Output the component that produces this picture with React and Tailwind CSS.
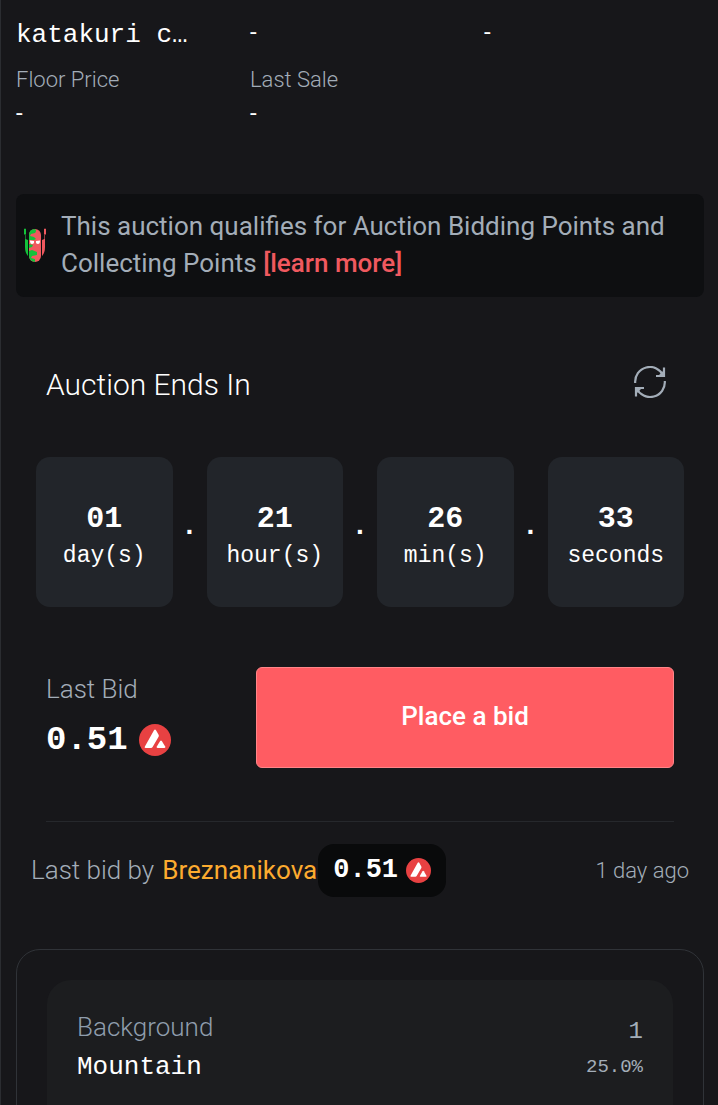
import React from "react";

const details = [
  { label: "Floor Price", value: "-" },
  { label: "Last Sale", value: "-" },
];

const countdown = [
  { value: "01", unit: "day(s)" },
  { value: "21", unit: "hour(s)" },
  { value: "26", unit: "min(s)" },
  { value: "33", unit: "seconds" },
];

const traits = [{ type: "Background", value: "Mountain", count: 1, rarity: "25.0%" }];

function AvaxIcon({ className }) {
  return (
    <svg viewBox="0 0 32 32" className={className} aria-hidden="true">
      <circle cx="16" cy="16" r="16" fill="#e84142" />
      <path
        d="M15 6.2Q16 4.7 17 6.2L19.6 10.8Q20.1 11.8 19.6 12.8L13.6 23.1Q13.1 24 12 24H6.8Q5 24 5.9 22.4Z"
        fill="#fff"
      />
      <path
        d="M21.2 17Q22 15.9 22.8 17L26.2 22.6Q26.9 24 25.4 24H18.6Q17.1 24 17.8 22.6Z"
        fill="#fff"
      />
    </svg>
  );
}

function MascotIcon() {
  return (
    <svg viewBox="0 0 22 34" className="h-[34px] w-[22px] shrink-0" aria-hidden="true">
      <path d="M0 1Q1 0 2 1V6H1.6V11L4 12V28Q1 25 1 19V7L0 6Z" fill="#14c23a" />
      <path d="M22 1Q21 0 20 1V6H20.4V11L18 12V28Q21 25 21 19V7L22 6Z" fill="#f0595f" />
      <rect x="5" y="1" width="12" height="33" rx="6" fill="#f0595f" />
      <path
        d="M5 7Q5 1 11 1Q13 3 11 5L7 6L6 8L10 9L12 11L10 12H5ZM5 16L9 17L8 19L5 20ZM5 23L8 22L13 24L13 27L8 28L7 30L11 31L11 34Q5 33 5 28Z"
        fill="#14c23a"
      />
      <path
        d="M6 12.5L10 13Q10.5 16 8 16Q6 16 6 12.5ZM16 12.5L12 13Q11.5 16 14 16Q16 16 16 12.5Z"
        fill="#fff"
      />
    </svg>
  );
}

function RefreshIcon() {
  return (
    <svg
      viewBox="0 0 32 32"
      className="h-8 w-8"
      fill="none"
      stroke="#a3adb8"
      strokeWidth="2.2"
      aria-hidden="true"
    >
      <path d="M1.2 17A14.8 14.8 0 0 1 29.4 9.6M30.8 15A14.8 14.8 0 0 1 2.6 22.4" />
      <path d="M30 1.5V10H22M2 30.5V22H10" />
      <path d="M25 9L30 4V10H25ZM7 23L2 28V22H7Z" fill="#a3adb8" stroke="none" />
    </svg>
  );
}

function Stats() {
  return (
    <div className="pl-[15px]">
      <div className="grid h-[49px] grid-cols-3">
        <p className="font-['Liberation_Mono',monospace] text-[26px] leading-[38px]">katakuri c…</p>
        <p className="text-[24px] leading-[32px]">-</p>
        <p className="text-[24px] leading-[32px]">-</p>
      </div>
      <dl className="grid grid-cols-3">
        {details.map((d) => (
          <div key={d.label}>
            <dt className="text-[22px] leading-[30px] font-light text-[#a3adb8]">{d.label}</dt>
            <dd className="text-[24px] leading-[36px]">{d.value}</dd>
          </div>
        ))}
      </dl>
    </div>
  );
}

function Countdown() {
  return (
    <div className="mx-5 mt-[52px] flex">
      {countdown.map((c, i) => (
        <React.Fragment key={c.unit}>
          {i > 0 && (
            <span className="flex w-[34px] shrink-0 items-center justify-center pb-3.5 font-['Liberation_Sans',sans-serif] text-[28px] font-bold">
              .
            </span>
          )}
          <div className="flex h-[150px] min-w-0 flex-1 flex-col items-center justify-center rounded-[14px] bg-[#22252a] pt-2.5 font-['Liberation_Mono',monospace]">
            <span className="text-[30px] leading-[38px] font-bold">{c.value}</span>
            <span className="text-[23px] leading-[36px]">{c.unit}</span>
          </div>
        </React.Fragment>
      ))}
    </div>
  );
}

export default function App() {
  return (
    <main className="h-screen overflow-hidden border-l border-[#2b2d31] bg-[#17171a] pt-4 font-['Roboto',sans-serif] text-white">
      <Stats />

      <div className="mr-[14px] ml-[15px]">
        <div className="mt-[63px] flex items-center rounded-lg bg-[#0e0f11] pt-[14px] pb-[15px] pl-2">
          <MascotIcon />
          <p className="ml-[15px] text-[26px] leading-[37px] text-[#a3adb8]">
            This auction qualifies for Auction Bidding Points and Collecting Points{" "}
            <a href="#learn" className="font-medium text-[#f0595f]">
              [learn more]
            </a>
          </p>
        </div>

        <section>
          <div className="mx-[30px] mt-[68px] flex items-center justify-between">
            <h2 className="text-[30px] leading-[40px] font-light">Auction Ends In</h2>
            <button type="button" aria-label="Refresh" className="mr-2 mb-1.5">
              <RefreshIcon />
            </button>
          </div>

          <Countdown />

          <div className="mx-[30px] mt-[60px] flex border-b border-[#26282c] pb-[53px]">
            <div className="w-[210px] shrink-0 pt-1">
              <p className="text-[26px] leading-[36px] font-light text-[#a3adb8]">Last Bid</p>
              <p className="mt-2 flex items-center gap-[11px] font-['Liberation_Mono',monospace] text-[34px] leading-[50px] font-bold">
                0.51
                <AvaxIcon className="h-8 w-8" />
              </p>
            </div>
            <button
              type="button"
              className="h-[101px] flex-1 rounded-md border border-[#ff8589] bg-[#ff5c62] pb-0.5 text-[26px] font-medium"
            >
              Place a bid
            </button>
          </div>
        </section>

        <div className="mx-[15px] mt-[22px] flex items-center text-[26px] font-light text-[#a3adb8]">
          <span className="mr-2">Last bid by</span>
          <a href="#bidder" className="mr-px font-normal text-[#fdab2f]">
            Breznanikova
          </a>
          <span className="flex h-[53px] items-center gap-2 rounded-2xl bg-[#090a0b] px-[15px] font-['Liberation_Mono',monospace] text-[27px] font-bold text-white">
            0.51
            <AvaxIcon className="h-[25px] w-[25px]" />
          </span>
          <time className="ml-auto text-[22px]">1 day ago</time>
        </div>

        <section className="mt-[52px] rounded-3xl border border-[#303338] p-[30px]">
          {traits.map((t) => (
            <div key={t.type} className="flex justify-between rounded-3xl bg-[#1c1d1f] px-[30px] pt-7 pb-12">
              <div>
                <p className="text-[26px] leading-[38px] font-light text-[#8f9dad]">{t.type}</p>
                <p className="font-['Liberation_Mono',monospace] text-[26px] leading-[42px]">{t.value}</p>
              </div>
              <div className="pt-1.5 text-right font-['Liberation_Mono',monospace] text-[#a3adb8]">
                <p className="text-[24px] leading-[36px]">{t.count}</p>
                <p className="text-[19px] leading-[34px]">{t.rarity}</p>
              </div>
            </div>
          ))}
        </section>
      </div>
    </main>
  );
}
